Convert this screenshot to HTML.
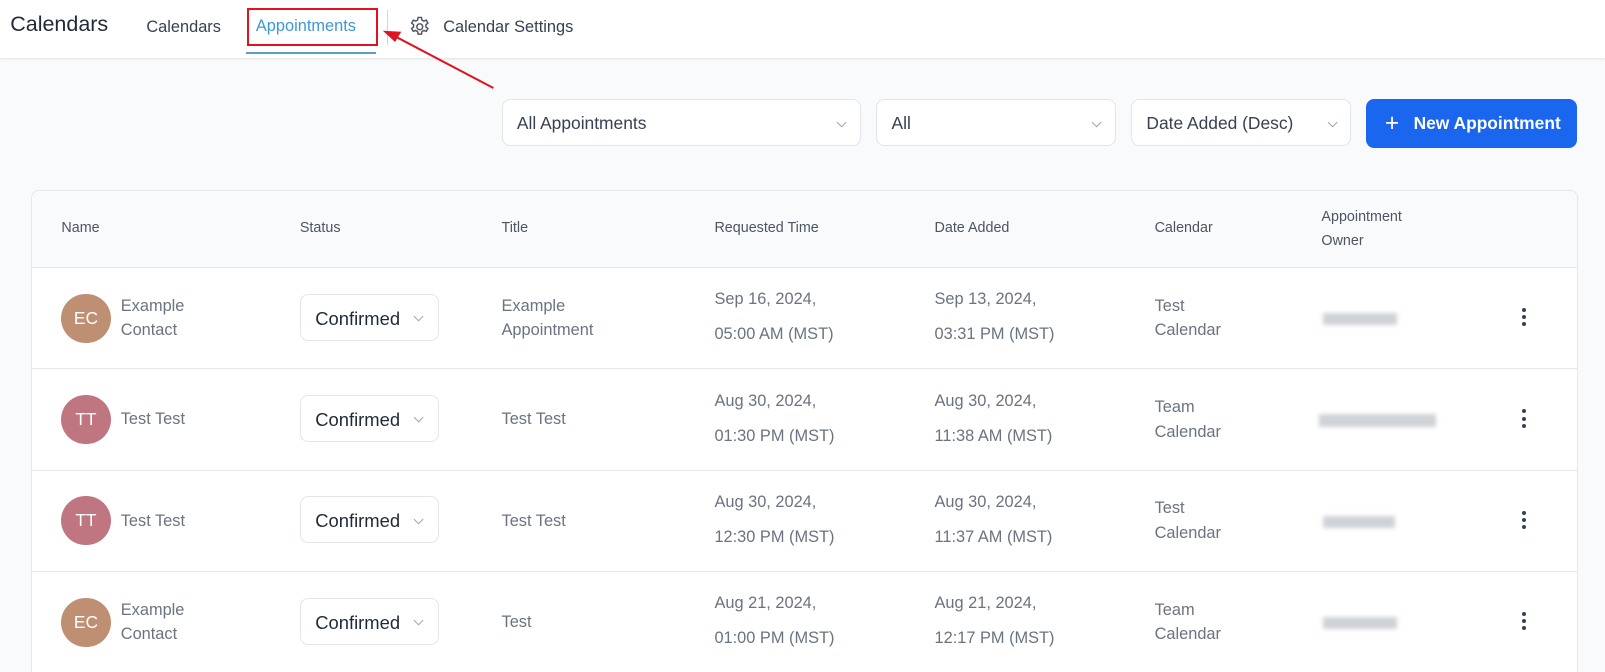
<!DOCTYPE html>
<html style="overflow:hidden"><head><style>
html,body{margin:0;padding:0;}
body{width:1568px;height:656px;overflow:hidden;zoom:1.02359;background:#f9fafb;font-family:"Liberation Sans",sans-serif;position:relative;}
.a{position:absolute;}
.hdr{left:0;top:0;width:1568px;height:57px;background:#fff;box-shadow:0 1px 3px rgba(0,0,0,.12);}
.dd{background:#fff;border:1px solid #e2e5ea;border-radius:8px;height:46px;top:97px;font-size:17px;color:#374151;line-height:46px;box-sizing:border-box;padding-left:14px;}
.chev{position:absolute;right:14px;top:18px;width:6px;height:6px;border-right:1px solid #9ca3af;border-bottom:1px solid #9ca3af;transform:rotate(45deg);}
.tbl{left:30px;top:186px;width:1510px;height:540px;background:#fff;border:1px solid #e5e7eb;border-radius:8px;overflow:hidden;}
.th{position:absolute;font-size:14px;color:#4b5563;line-height:24px;}
.row{position:absolute;left:0;width:1510px;height:98px;border-top:1px solid #e5e7eb;}
.av{position:absolute;left:29px;top:25px;width:48px;height:48px;border-radius:50%;color:#fff;font-size:17px;text-align:center;line-height:48px;}
.t{position:absolute;font-size:16px;color:#6b7280;line-height:24px;}
.d{position:absolute;font-size:16px;color:#6b7280;line-height:34px;}
.st{position:absolute;left:262px;top:25px;width:136px;height:46px;border:1px solid #e2e5ea;border-radius:8px;font-size:18px;color:#1f2937;line-height:46px;padding-left:14px;box-sizing:border-box;}
.st i{position:absolute;right:16px;top:18px;width:6px;height:6px;border-right:1px solid #9ca3af;border-bottom:1px solid #9ca3af;transform:rotate(45deg);}
.bl{position:absolute;height:12px;background:#cfd2d6;filter:blur(2px);}
.dots{position:absolute;left:1456px;top:39px;width:4px;}
.dots b{display:block;width:4px;height:4px;border-radius:50%;background:#374151;margin-bottom:3px;}
</style></head><body>
<div class="a hdr"></div>
<div class="a" style="left:10px;top:12px;font-size:21px;color:#1f2937;">Calendars</div>
<div class="a" style="left:143px;top:18px;font-size:16px;color:#374151;">Calendars</div>
<div class="a" style="left:250px;top:17px;font-size:16px;color:#3d98d3;">Appointments</div>
<div class="a" style="left:240px;top:51px;width:127px;height:2px;background:#5a9fc9;"></div>
<div class="a" style="left:241px;top:8px;width:124px;height:33px;border:2px solid #e0141e;"></div>
<div class="a" style="left:378px;top:10px;width:1px;height:34px;background:#d1d5db;"></div>
<svg class="a" style="left:399px;top:15px" width="23" height="23" viewBox="0 0 24 24" fill="none" stroke="#4b5563" stroke-width="1.5"><circle cx="12" cy="12" r="3"/><path d="M10.3 2.5h3.4l.5 2.6 1.9 1.1 2.5-.9 1.7 2.9-2 1.7v2.2l2 1.7-1.7 2.9-2.5-.9-1.9 1.1-.5 2.6h-3.4l-.5-2.6-1.9-1.1-2.5.9-1.7-2.9 2-1.7v-2.2l-2-1.7 1.7-2.9 2.5.9 1.900-1.1z"/></svg>
<div class="a" style="left:433px;top:18px;font-size:16px;color:#374151;">Calendar Settings</div>
<svg class="a" style="left:0;top:0" width="600" height="100"><line x1="482" y1="86" x2="385" y2="35" stroke="#e0141e" stroke-width="2"/><polygon points="374,30 392,31 386,41" fill="#e0141e"/></svg>

<div class="a dd" style="left:490px;width:351px;">All Appointments<span class="chev"></span></div>
<div class="a dd" style="left:856px;width:234px;">All<span class="chev"></span></div>
<div class="a dd" style="left:1105px;width:215px;">Date Added (Desc)<span class="chev"></span></div>
<div class="a" style="left:1335px;top:97px;width:206px;height:48px;background:#1a66ef;border-radius:8px;color:#fff;font-size:17px;font-weight:bold;line-height:48px;"><span style="position:absolute;left:18px;font-weight:normal;font-size:24px;">+</span><span style="position:absolute;left:46px;">New Appointment</span></div>

<div class="a tbl">
 <div style="position:absolute;left:0;top:0;width:1510px;height:74px;background:#f9fafb;"></div>
 <div class="th" style="left:29px;top:24px">Name</div>
 <div class="th" style="left:262px;top:24px">Status</div>
 <div class="th" style="left:459px;top:24px">Title</div>
 <div class="th" style="left:667px;top:24px">Requested Time</div>
 <div class="th" style="left:882px;top:24px">Date Added</div>
 <div class="th" style="left:1097px;top:24px">Calendar</div>
 <div class="th" style="left:1260px;top:13px">Appointment<br>Owner</div>

 <div class="row" style="top:74px">
  <div class="av" style="background:#bf8f74">EC</div><div class="t" style="left:87px;top:25px">Example<br>Contact</div>
  <div class="st">Confirmed<i></i></div>
  <div class="t" style="left:459px;top:25px">Example<br>Appointment</div>
  <div class="d" style="left:667px;top:14px">Sep 16, 2024,<br>05:00 AM (MST)</div>
  <div class="d" style="left:882px;top:14px">Sep 13, 2024,<br>03:31 PM (MST)</div>
  <div class="t" style="left:1097px;top:25px">Test<br>Calendar</div>
  <div class="bl" style="left:1262px;top:44px;width:72px"></div>
  <div class="dots"><b></b><b></b><b></b></div>
 </div>
 <div class="row" style="top:173px">
  <div class="av" style="background:#c07681">TT</div><div class="t" style="left:87px;top:37px">Test Test</div>
  <div class="st">Confirmed<i></i></div>
  <div class="t" style="left:459px;top:37px">Test Test</div>
  <div class="d" style="left:667px;top:14px">Aug 30, 2024,<br>01:30 PM (MST)</div>
  <div class="d" style="left:882px;top:14px">Aug 30, 2024,<br>11:38 AM (MST)</div>
  <div class="t" style="left:1097px;top:25px">Team<br>Calendar</div>
  <div class="bl" style="left:1258px;top:44px;width:114px"></div>
  <div class="dots"><b></b><b></b><b></b></div>
 </div>
 <div class="row" style="top:272px">
  <div class="av" style="background:#c07681">TT</div><div class="t" style="left:87px;top:37px">Test Test</div>
  <div class="st">Confirmed<i></i></div>
  <div class="t" style="left:459px;top:37px">Test Test</div>
  <div class="d" style="left:667px;top:14px">Aug 30, 2024,<br>12:30 PM (MST)</div>
  <div class="d" style="left:882px;top:14px">Aug 30, 2024,<br>11:37 AM (MST)</div>
  <div class="t" style="left:1097px;top:25px">Test<br>Calendar</div>
  <div class="bl" style="left:1262px;top:44px;width:70px"></div>
  <div class="dots"><b></b><b></b><b></b></div>
 </div>
 <div class="row" style="top:371px">
  <div class="av" style="background:#bf8f74">EC</div><div class="t" style="left:87px;top:25px">Example<br>Contact</div>
  <div class="st">Confirmed<i></i></div>
  <div class="t" style="left:459px;top:37px">Test</div>
  <div class="d" style="left:667px;top:14px">Aug 21, 2024,<br>01:00 PM (MST)</div>
  <div class="d" style="left:882px;top:14px">Aug 21, 2024,<br>12:17 PM (MST)</div>
  <div class="t" style="left:1097px;top:25px">Team<br>Calendar</div>
  <div class="bl" style="left:1262px;top:44px;width:72px"></div>
  <div class="dots"><b></b><b></b><b></b></div>
 </div>
 <div class="row" style="top:470px"></div>
</div>
</body></html>
